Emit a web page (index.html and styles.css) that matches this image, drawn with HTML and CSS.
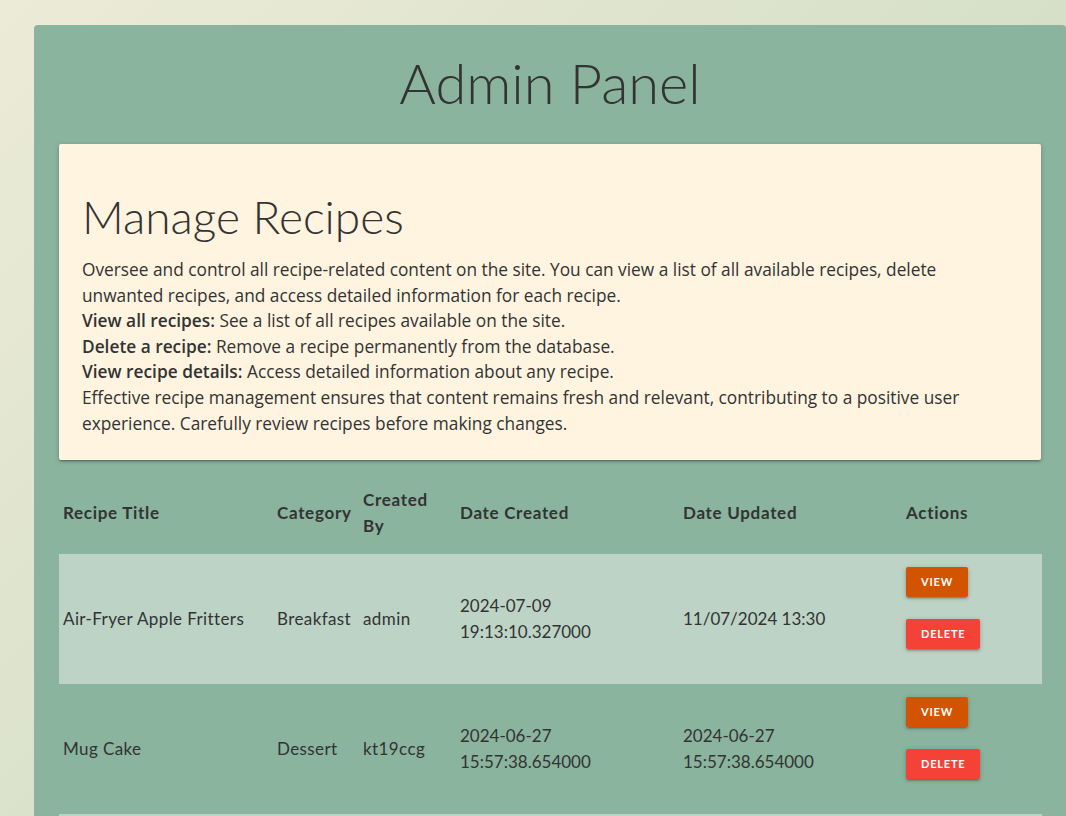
FILE: index.html
```html
<!DOCTYPE html>
<html lang="en">
<head>
<meta charset="utf-8">
<title>Admin Panel</title>
<link rel="stylesheet" href="styles.css">
</head>
<body>
<div class="page">
  <main class="panel">
    <h1 class="panel-title">Admin Panel</h1>
    <section class="card">
      <h2 class="card-title">Manage Recipes</h2>
      <p class="card-text">Oversee and control all recipe-related content on the site. You can view a list of all available recipes, delete unwanted recipes, and access detailed information for each recipe.<br>
      <strong>View all recipes:</strong> See a list of all recipes available on the site.<br>
      <strong>Delete a recipe:</strong> Remove a recipe permanently from the database.<br>
      <strong>View recipe details:</strong> Access detailed information about any recipe.<br>
      Effective recipe management ensures that content remains fresh and relevant, contributing to a positive user experience. Carefully review recipes before making changes.</p>
    </section>
    <table class="recipes">
      <colgroup>
        <col class="c-title"><col class="c-cat"><col class="c-by"><col class="c-created"><col class="c-updated"><col class="c-actions">
      </colgroup>
      <thead>
        <tr>
          <th>Recipe Title</th>
          <th>Category</th>
          <th class="by">Created By</th>
          <th>Date Created</th>
          <th>Date Updated</th>
          <th>Actions</th>
        </tr>
      </thead>
      <tbody>
        <tr>
          <td>Air-Fryer Apple Fritters</td>
          <td>Breakfast</td>
          <td class="by">admin</td>
          <td class="date">2024-07-09 19:13:10.327000</td>
          <td class="date">11/07/2024 13:30</td>
          <td><div class="actions"><a class="btn btn-view" href="#">View</a><a class="btn btn-delete" href="#">Delete</a></div></td>
        </tr>
        <tr>
          <td>Mug Cake</td>
          <td>Dessert</td>
          <td class="by">kt19ccg</td>
          <td class="date">2024-06-27 15:57:38.654000</td>
          <td class="date">2024-06-27 15:57:38.654000</td>
          <td><div class="actions"><a class="btn btn-view" href="#">View</a><a class="btn btn-delete" href="#">Delete</a></div></td>
        </tr>
        <tr>
          <td>Banana Bread</td>
          <td>Baking</td>
          <td class="by">admin</td>
          <td class="date">2024-06-20 10:12:44.118000</td>
          <td class="date">2024-06-20 10:12:44.118000</td>
          <td><div class="actions"><a class="btn btn-view" href="#">View</a><a class="btn btn-delete" href="#">Delete</a></div></td>
        </tr>
      </tbody>
    </table>
  </main>
</div>
</body>
</html>
```
FILE: styles.css
```css
html, body {
  margin: 0;
  padding: 0;
}
body {
  min-height: 100vh;
  background: linear-gradient(135deg, #ecebd8 0%, #d7e0c9 50%, #c9d8c0 100%);
  font-family: "Open Sans", "Liberation Sans", sans-serif;
  color: #333333;
  overflow: hidden;
}
.page {
  padding: 25px 0 0 34px;
}
.panel {
  width: 1032px;
  box-sizing: border-box;
  background: #8ab49d;
  border-radius: 4px;
  padding: 1px 25px 40px 25px;
}
.panel-title {
  font-family: Lato, "Open Sans", sans-serif;
  font-weight: 300;
  font-size: 56px;
  line-height: 60px;
  text-align: center;
  margin: 27px 0 0;
  color: #333333;
}
.card {
  margin-top: 31px;
  background: #fef4e0;
  border-radius: 2px;
  padding: 24px 22px 24px 23px;
  box-shadow: 0 2px 2px 0 rgba(0,0,0,0.14), 0 3px 1px -2px rgba(0,0,0,0.12), 0 1px 5px 0 rgba(0,0,0,0.2);
}
.card-title {
  font-family: Lato, "Open Sans", sans-serif;
  font-weight: 300;
  font-size: 46px;
  line-height: 50px;
  margin: 24px 0 15px;
  color: #333333;
}
.card-text {
  margin: 0;
  max-width: 905px;
  font-size: 17.3px;
  line-height: 25.6px;
}
.card-text strong {
  font-weight: 600;
}
.recipes {
  width: 983px;
  margin-top: 16px;
  border-collapse: collapse;
  table-layout: fixed;
  font-family: Lato, "Open Sans", sans-serif;
  font-size: 17px;
  letter-spacing: 0.4px;
  line-height: 26px;
  color: #333333;
}
.c-title { width: 214px; }
.c-cat { width: 86px; }
.c-by { width: 97px; }
.c-created { width: 223px; }
.c-updated { width: 223px; }
.c-actions { width: 140px; }
.recipes th {
  text-align: left;
  font-weight: 700;
  letter-spacing: 0.7px;
  padding: 11px 4px 15px;
  vertical-align: middle;
}
.recipes td {
  padding: 13px 4px;
  vertical-align: middle;
}
.recipes th.by, .recipes td.by {
  padding-right: 14px;
}
.recipes td.date {
  padding-right: 30px;
  letter-spacing: 0;
}
.recipes tbody tr:nth-child(odd) {
  background: #bcd3c6;
}
.actions {
  display: flex;
  flex-direction: column;
  align-items: flex-start;
  gap: 22px;
  padding-bottom: 22px;
}
.btn {
  display: inline-block;
  height: 30px;
  line-height: 30px;
  padding: 0 15px;
  font-family: Lato, "Open Sans", sans-serif;
  font-size: 11px;
  font-weight: 700;
  letter-spacing: 0.8px;
  text-transform: uppercase;
  text-decoration: none;
  color: #ffffff;
  border-radius: 2px;
  box-shadow: 0 2px 2px 0 rgba(0,0,0,0.14), 0 3px 1px -2px rgba(0,0,0,0.12), 0 1px 5px 0 rgba(0,0,0,0.2);
}
.btn-view {
  background: #d35400;
}
.btn-delete {
  background: #f44336;
}
```
